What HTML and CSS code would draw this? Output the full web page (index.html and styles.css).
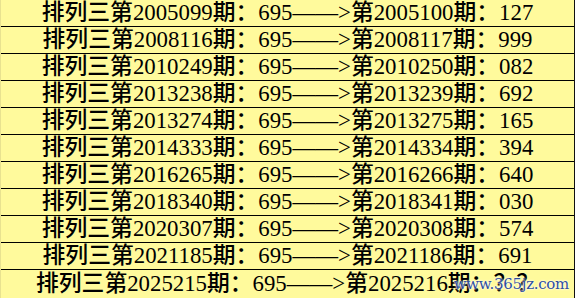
FILE: index.html
```html
<!DOCTYPE html>
<html lang="zh">
<head>
<meta charset="utf-8">
<link rel="stylesheet" href="styles.css">
</head>
<body>
<div class="sheet">
  <div class="row">排列三第2005099期：695——&gt;第2005100期：127</div>
  <div class="row">排列三第2008116期：695——&gt;第2008117期：999</div>
  <div class="row">排列三第2010249期：695——&gt;第2010250期：082</div>
  <div class="row">排列三第2013238期：695——&gt;第2013239期：692</div>
  <div class="row">排列三第2013274期：695——&gt;第2013275期：165</div>
  <div class="row">排列三第2014333期：695——&gt;第2014334期：394</div>
  <div class="row">排列三第2016265期：695——&gt;第2016266期：640</div>
  <div class="row">排列三第2018340期：695——&gt;第2018341期：030</div>
  <div class="row">排列三第2020307期：695——&gt;第2020308期：574</div>
  <div class="row">排列三第2021185期：695——&gt;第2021186期：691</div>
  <div class="row last">排列三第2025215期：695——&gt;第2025216期：？？</div>
  <div class="watermark">www.365jz.com</div>
</div>
</body>
</html>
```
FILE: styles.css
```css
html, body {
  margin: 0;
  padding: 0;
  background: #fffa9c;
}
.sheet {
  position: relative;
  width: 575px;
  height: 298px;
  box-sizing: border-box;
  border-right: 1px solid #111;
  border-left: 1px solid #e8e290;
  background: #fffa9c;
  display: flex;
  flex-direction: column;
  overflow: hidden;
}
.row {
  height: 27px;
  flex: 0 0 27px;
  box-sizing: border-box;
  border-bottom: 1px solid #000;
  display: flex;
  align-items: center;
  justify-content: center;
  font-family: "Liberation Serif", "Noto Sans CJK SC", serif;
  font-size: 22.8px;
  font-weight: 500;
  color: #000;
  white-space: nowrap;
  line-height: 1;
}
.row.last {
  border-bottom: none;
  flex: 0 0 28px;
  height: 28px;
}
.watermark {
  position: absolute;
  right: 5px;
  bottom: 5px;
  font-family: "DejaVu Serif", serif;
  font-size: 15px;
  letter-spacing: -0.3px;
  color: #2f4f9e;
  text-shadow: 0 0 2px #fff, 0 0 2px #fff;
}
```
